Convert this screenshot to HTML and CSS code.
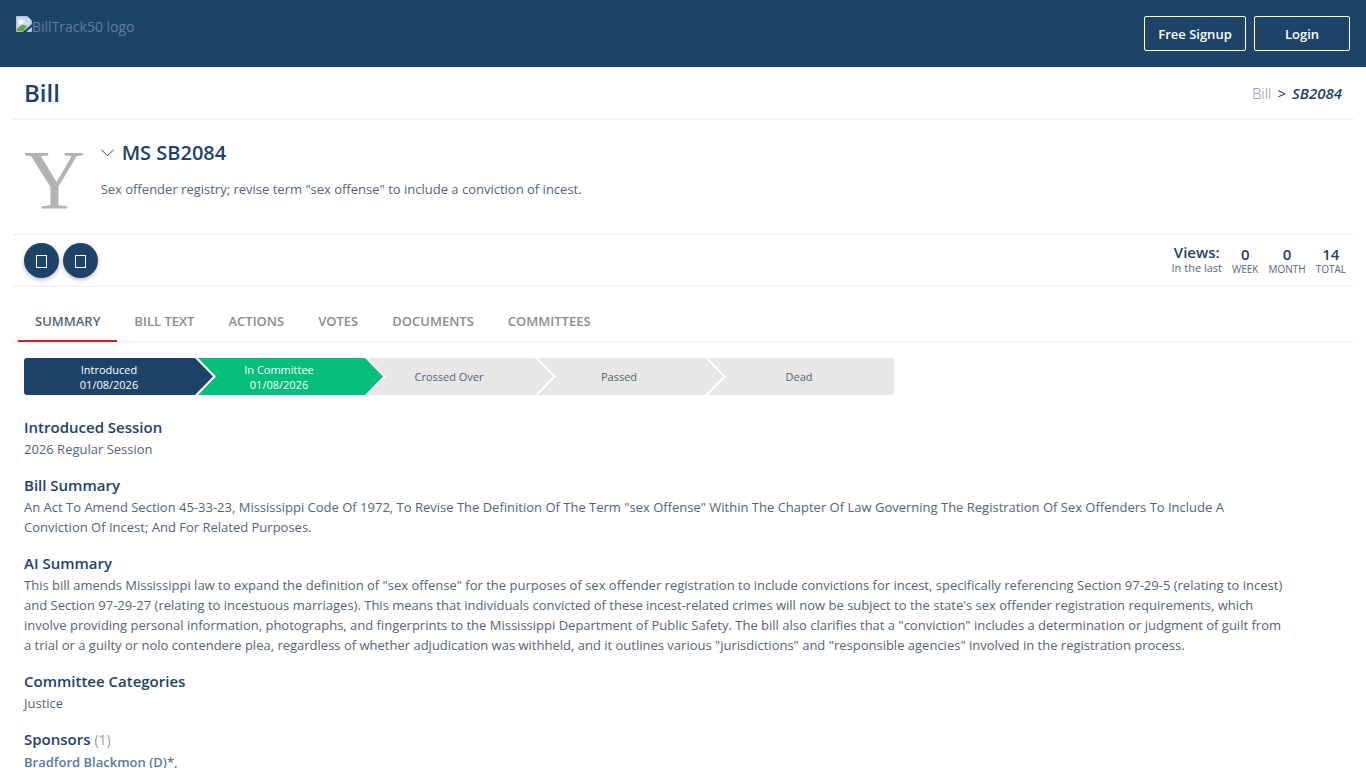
FILE: index.html
```html
<!DOCTYPE html>
<html lang="en">

<head>
    <meta charset="UTF-8">
    <meta name="viewport" content="width=device-width, initial-scale=1.0">
    <title>BillTrack50 - MS SB2084</title>
    <link rel="stylesheet" href="styles.css">
</head>

<body>
    <header class="topbar">
        <a href="#" class="logo">
            <svg width="16" height="16" viewBox="0 0 16 16" aria-hidden="true">
                <path d="M0.5 0.5H11L15.500 5V15.500H0.500Z" fill="#c6d9f5" stroke="#b9bcc2"/>
                <circle cx="5" cy="6" r="2.500" fill="#fff"/>
                <path d="M1 15V13L6 8.500L11 10L7 15Z" fill="#5aa83e"/>
                <path d="M11 0.500V5H15.500Z" fill="#fff" stroke="#b9bcc2"/>
                <path d="M6.500 16L16 8V11L10 16Z" fill="#1e4369"/>
            </svg><span>BillTrack50 logo</span>
        </a>
        <div class="topbar-buttons">
            <button type="button" class="btn btn-signup">Free Signup</button>
            <button type="button" class="btn btn-login">Login</button>
        </div>
    </header>

    <main class="container">
        <div class="title-row">
            <h1>Bill</h1>
            <nav class="breadcrumb"><a href="#">Bill</a><span>&gt;</span><em>SB2084</em></nav>
        </div>

        <div class="bill-row">
            <div class="state-icon">Y</div>
            <div class="bill-info">
                <h2>
                    <svg width="13" height="8" viewBox="0 0 13 8" aria-hidden="true">
                        <path d="M0.500 0.800L6.500 6.800L12.500 0.800" fill="none" stroke="#1e4369"/>
                    </svg>MS SB2084
                </h2>
                <p>Sex offender registry; revise term "sex offense" to include a conviction of incest.</p>
            </div>
        </div>

        <div class="action-row">
            <div class="actions">
                <button type="button" class="round-btn" aria-label="Share"><span class="glyph"></span></button>
                <button type="button" class="round-btn" aria-label="Print"><span class="glyph"></span></button>
            </div>
            <div class="views">
                <div class="views-label"><strong>Views:</strong><small>In the last</small></div>
                <div class="views-count"><strong>0</strong><small>WEEK</small></div>
                <div class="views-count"><strong>0</strong><small>MONTH</small></div>
                <div class="views-count"><strong>14</strong><small>TOTAL</small></div>
            </div>
        </div>

        <nav class="tabs">
            <a href="#" class="active">SUMMARY</a>
            <a href="#">BILL TEXT</a>
            <a href="#">ACTIONS</a>
            <a href="#">VOTES</a>
            <a href="#">DOCUMENTS</a>
            <a href="#">COMMITTEES</a>
        </nav>

        <div class="content">
            <ol class="progress">
                <li class="introduced">Introduced<br>01/08/2026</li>
                <li class="committee">In Committee<br>01/08/2026</li>
                <li>Crossed Over</li>
                <li>Passed</li>
                <li>Dead</li>
            </ol>

            <section>
                <h3>Introduced Session</h3>
                <p>2026 Regular Session</p>
            </section>
            <section>
                <h3>Bill Summary</h3>
                <p>An Act To Amend Section 45-33-23, Mississippi Code Of 1972, To Revise The Definition Of The Term "sex Offense" Within The Chapter Of Law Governing The Registration Of Sex Offenders To Include A Conviction Of Incest; And For Related Purposes.</p>
            </section>
            <section>
                <h3>AI Summary</h3>
                <p>This bill amends Mississippi law to expand the definition of "sex offense" for the purposes of sex offender registration to include convictions for incest, specifically referencing Section 97-29-5 (relating to incest) and Section 97-29-27 (relating to incestuous marriages). This means that individuals convicted of these incest-related crimes will now be subject to the state's sex offender registration requirements, which involve providing personal information, photographs, and fingerprints to the Mississippi Department of Public Safety. The bill also clarifies that a "conviction" includes a determination or judgment of guilt from a trial or a guilty or nolo contendere plea, regardless of whether adjudication was withheld, and it outlines various "jurisdictions" and "responsible agencies" involved in the registration process.</p>
            </section>
            <section>
                <h3>Committee Categories</h3>
                <p>Justice</p>
            </section>
            <section>
                <h3>Sponsors <span class="count">(1)</span></h3>
                <p><a href="#" class="sponsor">Bradford Blackmon (D)*,</a></p>
            </section>
        </div>
    </main>
</body>

</html>
```
FILE: styles.css
```css
body {
    font-family: "Open Sans", sans-serif;
    font-size: 13px;
    line-height: 20px;
    margin: 0;
    color: #526579;
    background-color: #fff;
    overflow-x: hidden;
    scrollbar-width: none;
}

body::-webkit-scrollbar {
    display: none;
}

h1, h2, h3, p {
    margin: 0;
    color: #1e4369;
}

a {
    text-decoration: none;
}

.topbar {
    display: flex;
    justify-content: space-between;
    align-items: flex-start;
    padding: 16px;
    background-color: #1e4369;
}

.logo {
    display: flex;
    align-items: flex-start;
    font-size: 14px;
    line-height: 22px;
    color: #5c7e9f;
}

.topbar-buttons {
    display: flex;
    gap: 8px;
}

.btn {
    height: 35px;
    padding: 0;
    font-family: inherit;
    font-size: 13px;
    font-weight: 600;
    color: #fff;
    background-color: transparent;
    border: 1px solid #fff;
    border-radius: 2px;
    cursor: pointer;
}

.btn-signup {
    width: 102px;
}

.btn-login {
    width: 96px;
}

.container {
    margin: 0 12px;
}

.title-row {
    display: flex;
    justify-content: space-between;
    align-items: center;
    padding: 10px 12px;
    border-bottom: 1px solid #eee;
}

h1 {
    font-size: 24px;
    font-weight: 600;
    line-height: 32px;
}

.breadcrumb {
    display: flex;
    gap: 6px;
    font-size: 15px;
    color: #1e4369;
}

.breadcrumb a {
    font-weight: 300;
    color: #8d8d9d;
}

.breadcrumb em {
    font-weight: 600;
}

.bill-row {
    display: flex;
    gap: 16px;
    height: 114px;
    padding: 0 12px;
    border-bottom: 1px solid #eee;
}

.state-icon {
    padding-top: 19px;
    font-family: "Liberation Serif", serif;
    font-size: 84px;
    line-height: 84px;
    color: #b3b3b3;
}

.bill-info {
    padding-top: 19px;
}

h2 {
    display: flex;
    align-items: center;
    gap: 8px;
    font-size: 20px;
    font-weight: 600;
    line-height: 28px;
}

.bill-info p {
    margin-top: 12px;
    color: #526579;
}

.action-row {
    display: flex;
    justify-content: space-between;
    padding: 8px 8px 8px 12px;
    border-bottom: 1px solid #eee;
}

.actions {
    display: flex;
    gap: 4px;
}

.round-btn {
    display: flex;
    align-items: center;
    justify-content: center;
    width: 35px;
    height: 35px;
    padding: 0;
    border: 0;
    border-radius: 50%;
    background-color: #1e4369;
    box-shadow: 0 2px 4px rgba(0, 0, 0, 0.25);
    cursor: pointer;
}

.glyph {
    width: 9px;
    height: 11px;
    margin-top: 2px;
    border: 1px solid #fff;
}

.views {
    display: flex;
    gap: 10px;
    text-align: center;
}

.views strong,
.views small {
    display: block;
}

.views strong {
    font-size: 15px;
    font-weight: 600;
    line-height: 18px;
    color: #1e4369;
}

.views small {
    font-size: 11px;
    line-height: 14px;
}

.views-count {
    padding-top: 2px;
}

.views-count small {
    font-size: 10px;
    line-height: 12px;
}

.tabs {
    display: flex;
    height: 55px;
    padding: 0 6px;
    border-bottom: 1px solid #eee;
}

.tabs a {
    padding: 24px 17px 0;
    font-size: 13px;
    font-weight: 600;
    color: #8c8c8c;
    border-bottom: 2px solid transparent;
}

.tabs a.active {
    color: #526579;
    border-bottom-color: #c1272d;
}

.content {
    padding: 15px 12px;
}

.progress {
    display: flex;
    max-width: 870px;
    margin: 0 0 20px;
    padding: 0;
    list-style: none;
    font-size: 11px;
    line-height: 15px;
    text-align: center;
}

.progress li {
    --step: #e7e7e7;
    position: relative;
    display: flex;
    flex: 170;
    align-items: center;
    justify-content: center;
    height: 37px;
    background-color: var(--step);
}

.progress li:first-child {
    border-radius: 3px 0 0 3px;
}

.progress li:last-child {
    flex: 190;
    border-radius: 0 3px 3px 0;
}

.progress .introduced {
    --step: #1e4369;
    color: #fff;
}

.progress .committee {
    --step: #05bf7a;
    color: #fff;
}

/* arrow tip of each step, white edge first and the step colour above it */
.progress li:not(:last-child)::before,
.progress li:not(:last-child)::after {
    content: "";
    position: absolute;
    z-index: 1;
    top: 0;
    left: 100%;
    width: 22px;
    height: 37px;
    background-color: #fff;
    clip-path: polygon(0 0, 4px 0, 100% 50%, 4px 100%, 0 100%);
}

.progress li:not(:last-child)::after {
    width: 19px;
    background-color: var(--step);
    clip-path: polygon(0 0, 1px 0, 100% 50%, 1px 100%, 0 100%);
}

section {
    max-width: 1264px;
    margin-bottom: 14px;
}

h3 {
    font-size: 15px;
    font-weight: 600;
    line-height: 24px;
}

section p {
    color: #526579;
}

.count {
    font-weight: 400;
    font-size: 14px;
    color: #999;
}

.sponsor {
    font-weight: 600;
    color: #587b98;
}
```
